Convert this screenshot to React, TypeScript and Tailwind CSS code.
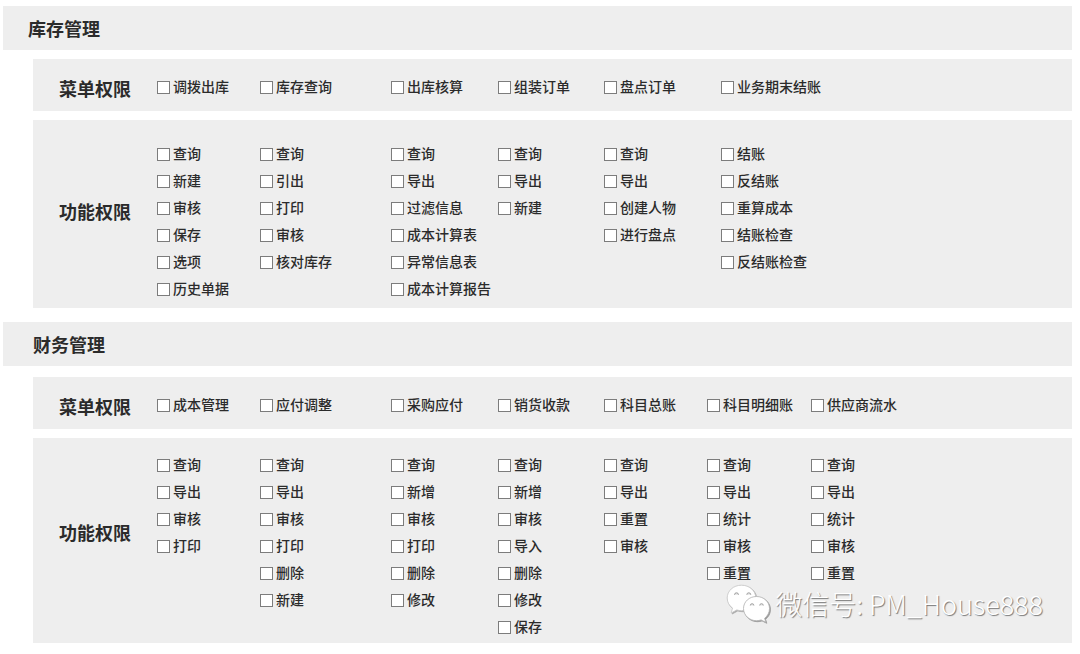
import React from "react";

type Module = {
  title: string;
  headerClass: string;
  gridClass: string;
  menuClass: string;
  bodyClass: string;
  labelClass: string;
  menus: { name: string; actions: string[] }[];
};

const modules: Module[] = [
  {
    title: "库存管理",
    headerClass: "pl-[25px]",
    gridClass: "grid-cols-[103fr_131fr_107fr_106fr_117fr_351fr]",
    menuClass: "mt-[9px]",
    bodyClass: "mt-[9px] pt-[21px] pb-[5px]",
    labelClass: "pb-[22px]",
    menus: [
      { name: "调拨出库", actions: ["查询", "新建", "审核", "保存", "选项", "历史单据"] },
      { name: "库存查询", actions: ["查询", "引出", "打印", "审核", "核对库存"] },
      { name: "出库核算", actions: ["查询", "导出", "过滤信息", "成本计算表", "异常信息表", "成本计算报告"] },
      { name: "组装订单", actions: ["查询", "导出", "新建"] },
      { name: "盘点订单", actions: ["查询", "导出", "创建人物", "进行盘点"] },
      { name: "业务期末结账", actions: ["结账", "反结账", "重算成本", "结账检查", "反结账检查"] },
    ],
  },
  {
    title: "财务管理",
    headerClass: "mt-[14px] pl-[30px]",
    gridClass: "grid-cols-[103fr_131fr_107fr_106fr_103fr_104fr_261fr]",
    menuClass: "mt-[11px]",
    bodyClass: "mt-[9px] pt-[14px] pb-[2px]",
    labelClass: "pb-[30px]",
    menus: [
      { name: "成本管理", actions: ["查询", "导出", "审核", "打印"] },
      { name: "应付调整", actions: ["查询", "导出", "审核", "打印", "删除", "新建"] },
      { name: "采购应付", actions: ["查询", "新增", "审核", "打印", "删除", "修改"] },
      { name: "销货收款", actions: ["查询", "新增", "审核", "导入", "删除", "修改", "保存"] },
      { name: "科目总账", actions: ["查询", "导出", "重置", "审核"] },
      { name: "科目明细账", actions: ["查询", "导出", "统计", "审核", "重置"] },
      { name: "供应商流水", actions: ["查询", "导出", "统计", "审核", "重置"] },
    ],
  },
];

function Check({ text }: { text: string }) {
  return (
    <label className="flex h-[27px] items-center gap-[3px] whitespace-nowrap text-[14px] font-medium">
      <input
        type="checkbox"
        className="size-[13px] shrink-0 appearance-none border border-[#7c7c7c] bg-white checked:bg-[#555]"
      />
      <span className="pb-[3px] leading-6">{text}</span>
    </label>
  );
}

function RowLabel({ text, className = "" }: { text: string; className?: string }) {
  return (
    <h3 className={`flex w-[124px] shrink-0 items-center self-stretch pl-[26px] text-[18px] leading-[26px] font-bold ${className}`}>
      {text}
    </h3>
  );
}

function Watermark() {
  return (
    <div className="pointer-events-none absolute right-[29px] bottom-[19px] flex items-center gap-[3px] text-white">
      <svg viewBox="0 0 46 40" className="h-10 w-[46px]" aria-hidden="true">
        <g fill="#fff" stroke="#c4c4c4" strokeWidth="0.8" strokeLinejoin="round" className="drop-shadow-[1px_1px_0px_#aaa]">
          <path d="M15.500 1.200C7.400 1.200 1.200 6.800 1.200 14c0 4.300 2 7.700 5.300 10.100L5.200 29l5.600-3.100c1.600.5 3.100.8 4.700.8 8.200 0 14.300-5.600 14.300-12.700S23.700 1.200 15.500 1.200Z" />
        </g>
        <g fill="#fff" stroke="#b0b0b0" strokeWidth="0.8" strokeLinejoin="round" className="drop-shadow-[1px_1px_0px_#999]">
          <path d="M30.500 12.500c-7.300 0-13 5.300-13 12s5.700 12.200 13 12.200c1.700 0 3.100-.3 4.600-.8l4.700 2.400-1.200-4c3-2.400 4.900-5.700 4.900-9.800 0-6.700-5.700-12-13-12Z" />
        </g>
        <path
          d="M8.500 10.800a2 2 0 1 1 4 0M20.800 10.800a2 2 0 1 1 4 0M24.300 21.500a1.800 1.800 0 1 1 3.600 0M33.700 21.500a1.800 1.800 0 1 1 3.600 0"
          fill="#e4e4e4"
          stroke="#999"
          strokeWidth="0.9"
        />
      </svg>
      <span className="text-[27px] leading-10 font-light whitespace-nowrap [text-shadow:1px_1px_1px_#777]">
        微信号: PM_House888
      </span>
    </div>
  );
}

function ModuleSection({ module, children }: { module: Module; children?: React.ReactNode }) {
  return (
    <section>
      <h2 className={`flex h-11 items-center bg-[#eeeeee] text-[18px] leading-[26px] font-bold ${module.headerClass}`}>
        {module.title}
      </h2>
      <div className="ml-[30px]">
        <div className={`flex min-h-[52px] items-center bg-[#eeeeee] pt-[5px] ${module.menuClass}`}>
          <RowLabel text="菜单权限" />
          <div className={`grid flex-1 ${module.gridClass}`}>
            {module.menus.map((m) => (
              <Check key={m.name} text={m.name} />
            ))}
          </div>
        </div>
        <div className={`relative flex bg-[#eeeeee] ${module.bodyClass}`}>
          <RowLabel text="功能权限" className={module.labelClass} />
          <div className={`grid flex-1 items-start ${module.gridClass}`}>
            {module.menus.map((m) => (
              <div key={m.name} className="flex flex-col">
                {m.actions.map((a) => (
                  <Check key={a} text={a} />
                ))}
              </div>
            ))}
          </div>
          {children}
        </div>
      </div>
    </section>
  );
}

export default function App() {
  return (
    <main className="bg-white pt-[6px] pr-2 pb-[10px] pl-[3px] font-['Noto_Sans_CJK_SC',sans-serif] text-[#2b2b2b]">
      <ModuleSection module={modules[0]} />
      <ModuleSection module={modules[1]}>
        <Watermark />
      </ModuleSection>
    </main>
  );
}
